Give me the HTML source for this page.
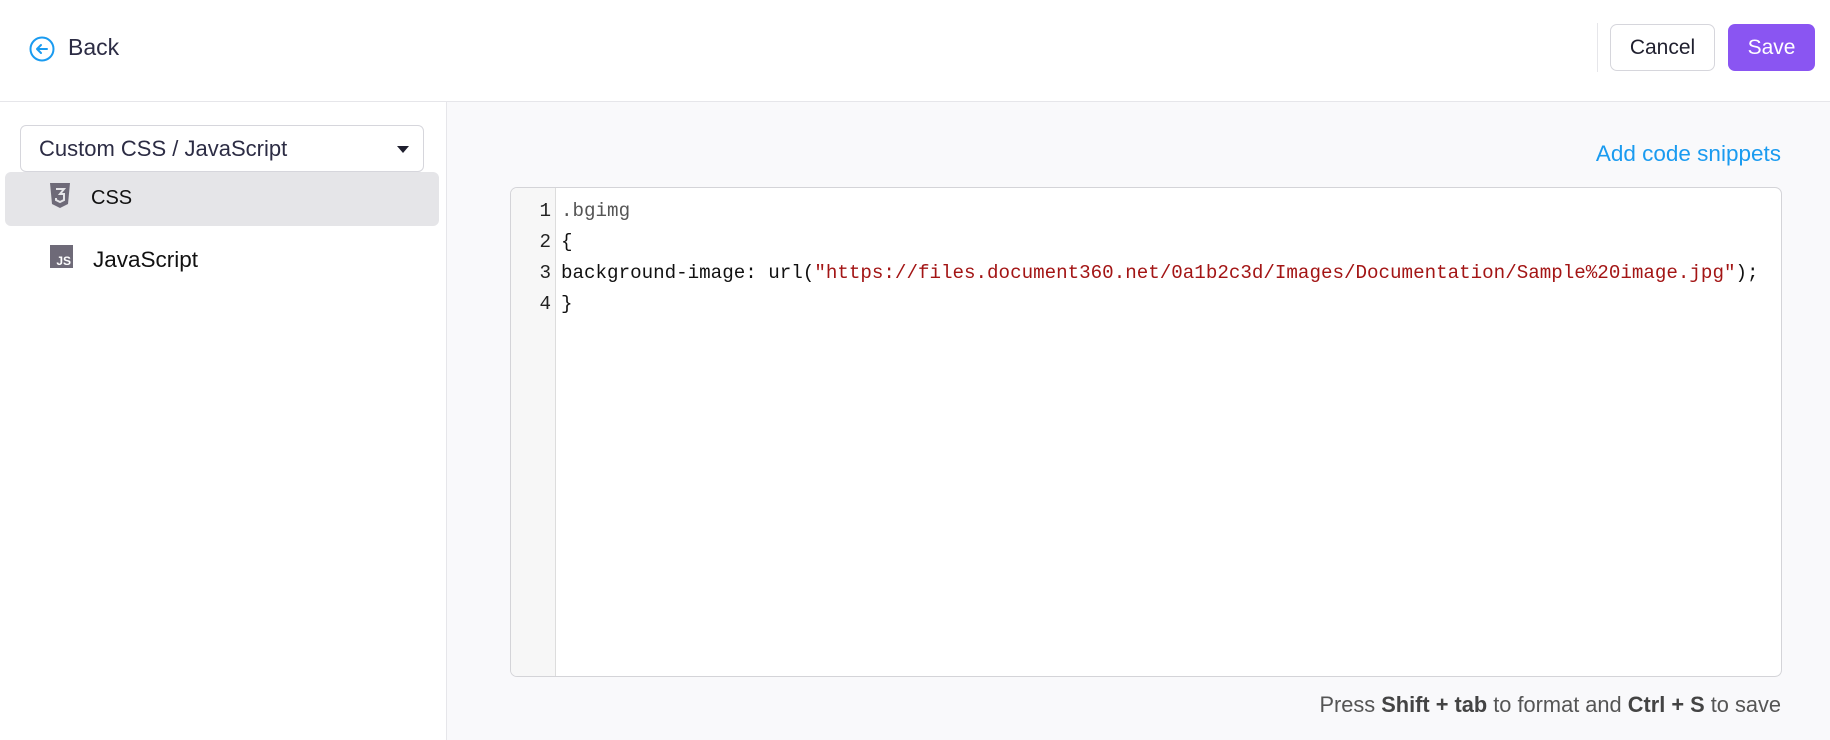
<!DOCTYPE html>
<html><head><meta charset="utf-8"><style>
*{margin:0;padding:0;box-sizing:border-box}
body{width:1830px;height:740px;overflow:hidden;font-family:"Liberation Sans",sans-serif;background:#f9f9fb;position:relative;color:#1f1f2e}
.hdr{position:absolute;left:0;top:0;width:1830px;height:102px;background:#fff;border-bottom:1px solid #e6e6ea}
.side{position:absolute;left:0;top:102px;width:447px;height:638px;background:#fff;border-right:1px solid #e6e6ea}
.btn{position:absolute;top:24px;height:47px;border-radius:7px;font-size:21px;display:flex;align-items:center;justify-content:center}
.mono{font-family:"Liberation Mono",monospace;font-size:19.2px}
</style></head><body>
<div class="hdr">
  <svg style="position:absolute;left:29px;top:36px" width="26" height="26" viewBox="0 0 26 26"><circle cx="13" cy="13" r="11.5" fill="none" stroke="#1a9bf0" stroke-width="2"/><path d="M18 13H8M12 9l-4 4 4 4" fill="none" stroke="#1a9bf0" stroke-width="2" stroke-linecap="round" stroke-linejoin="round"/></svg>
  <div style="position:absolute;left:68px;top:34px;font-size:23px;color:#2c2c44">Back</div>
  <div style="position:absolute;left:1597px;top:23px;width:1px;height:49px;background:#e6e6ea"></div>
  <div class="btn" style="left:1610px;width:105px;border:1px solid #d6d6dc;background:#fff;color:#1f1f2e">Cancel</div>
  <div class="btn" style="left:1728px;width:87px;background:#8a55f2;color:#fff">Save</div>
</div>
<div class="side">
  <div style="position:absolute;left:20px;top:23px;width:404px;height:47px;border:1px solid #d6d6dc;border-radius:6px;background:#fff">
    <div style="position:absolute;left:18px;top:10px;font-size:22px;color:#2c2c44">Custom CSS / JavaScript</div>
    <div style="position:absolute;right:14px;top:20px;width:0;height:0;border-left:6px solid transparent;border-right:6px solid transparent;border-top:7px solid #1f1f2e"></div>
  </div>
  <div style="position:absolute;left:5px;top:70px;width:434px;height:54px;background:#e5e5e8;border-radius:6px"></div>
  <svg style="position:absolute;left:50px;top:81px" width="20" height="25" viewBox="0 0 20 25"><path d="M0 0H20L18 21L10 25L2 21Z" fill="#6e6a78"/><path d="M6 6H14L10 11H14V17L10 19L6 17V15" fill="none" stroke="#e5e5e8" stroke-width="2"/></svg>
  <div style="position:absolute;left:91px;top:85px;font-size:20px;color:#111">CSS</div>
  <div style="position:absolute;left:50px;top:143px;width:23px;height:23px;background:#6e6a78"><span style="position:absolute;right:2px;bottom:0;font-size:12px;font-weight:bold;color:#fff">JS</span></div>
  <div style="position:absolute;left:93px;top:145px;font-size:22.5px;color:#111">JavaScript</div>
</div>
<div style="position:absolute;right:49px;top:141px;font-size:22.5px;color:#1a9bf0">Add code snippets</div>
<div style="position:absolute;left:510px;top:187px;width:1272px;height:490px;background:#fff;border:1px solid #d4d4d8;border-radius:7px;overflow:hidden">
  <div style="position:absolute;left:0;top:0;width:45px;height:100%;background:#f7f7f7;border-right:1px solid #ddd"></div>
  <div class="mono" style="position:absolute;left:0;top:8px;width:40px;text-align:right;line-height:31px;color:#222">1<br>2<br>3<br>4</div>
  <div class="mono" style="position:absolute;left:50px;top:8px;line-height:31px;color:#111;white-space:pre"><span style="color:#555">.bgimg</span>
{
background-image: url(<span style="color:#a31515">"https://files.document360.net/0a1b2c3d/Images/Documentation/Sample%20image.jpg"</span>);
}</div>
</div>
<div style="position:absolute;right:49px;top:692px;font-size:21.8px;color:#555">Press <b style="color:#444">Shift + tab</b> to format and <b style="color:#444">Ctrl + S</b> to save</div>
</body></html>
